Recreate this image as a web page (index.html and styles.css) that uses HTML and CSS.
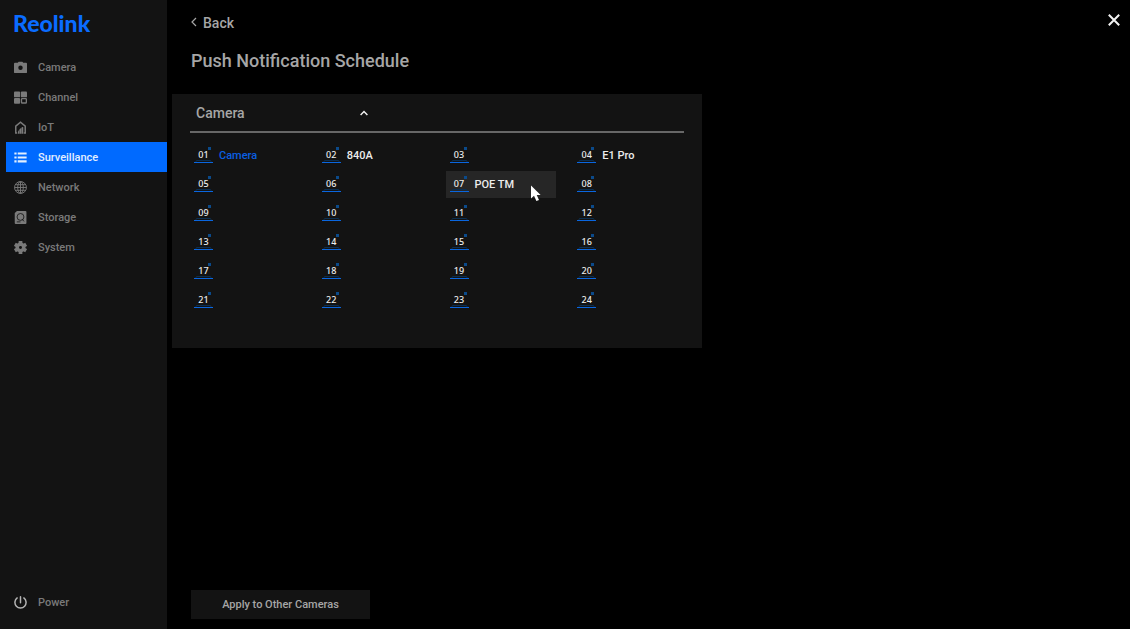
FILE: index.html
```html
<!DOCTYPE html>
<html lang="en">
<head>
<meta charset="utf-8">
<meta name="viewport" content="width=device-width, initial-scale=1">
<title>Push Notification Schedule</title>
<link rel="stylesheet" href="styles.css">
</head>
<body>
<div class="app">
  <aside class="sidebar">
    <div class="logo">Reolink</div>
    <nav class="nav">
      <a class="nav-item" href="#camera">
        <svg class="icon" viewBox="0 0 14 14"><path fill="currentColor" fill-rule="evenodd" d="M1 2h3l1-1.3h4L10 2h3q1 0 1 1v9q0 1-1 1H1q-1 0-1-1V3q0-1 1-1zM7 4.9a2.4 2.4 0 1 0 0 4.8 2.4 2.4 0 0 0 0-4.8z"/></svg>
        <span>Camera</span>
      </a>
      <a class="nav-item" href="#channel">
        <svg class="icon" viewBox="0 0 14 14"><g fill="currentColor"><rect x="0" y="0.6" width="6.6" height="6.2" rx="1"/><rect x="7.4" y="0.6" width="6.6" height="6.2" rx="1"/><rect x="0" y="7.6" width="6.6" height="6" rx="1"/></g><rect x="8.1" y="8.3" width="5.2" height="4.6" rx="0.6" fill="none" stroke="currentColor" stroke-width="1.4"/></svg>
        <span>Channel</span>
      </a>
      <a class="nav-item" href="#iot">
        <svg class="icon" viewBox="0 0 14 14"><path fill="none" stroke="currentColor" stroke-width="1.6" d="M3.4 13H1.9V5.6L7 1.2l5.1 4.4V13h-1.6"/><path fill="currentColor" d="M4.1 13.6q0-3.2 1.5-4.2v4.2zM5.9 13.6V8.8q.8-1 2-1.3v6.1zM8.2 13.6V6.8q1-.6 1.8 0v6.8z"/></svg>
        <span>IoT</span>
      </a>
      <a class="nav-item active" href="#surveillance" aria-current="page">
        <svg class="icon" viewBox="0 0 14 14"><path fill="currentColor" d="M.4 1.6h2.4v2.3H.4zM4 1.6h9.6v2.3H4zM.4 5.8h2.4v2.3H.4zM4 5.8h9.6v2.3H4zM.4 10h2.4v2.3H.4zM4 10h9.6v2.3H4z"/></svg>
        <span>Surveillance</span>
      </a>
      <a class="nav-item" href="#network">
        <svg class="icon" viewBox="0 0 14 14"><g fill="none" stroke="currentColor"><circle cx="7" cy="7" r="6.4"/><ellipse cx="7" cy="7" rx="3" ry="6.4"/><path d="M7 .6v12.8M.6 7h12.8M1.6 4h10.8M1.6 10h10.8"/></g></svg>
        <span>Network</span>
      </a>
      <a class="nav-item" href="#storage">
        <svg class="icon" viewBox="0 0 14 14"><path fill="currentColor" d="M3.2 0H12.4q1 0 1 1v12q0 1-1 1H1.8q-1 0-1-1V2.2z"/><circle cx="7" cy="6.4" r="3.7" fill="none" stroke="#131313" stroke-width="0.9"/><path d="M8.8 8.8l2 2.4M3 11.7h4" stroke="#131313" stroke-width="0.9"/></svg>
        <span>Storage</span>
      </a>
      <a class="nav-item" href="#system">
        <svg class="icon" viewBox="0 0 14 14"><circle cx="7" cy="7" r="3.5" fill="none" stroke="currentColor" stroke-width="3.8"/><g stroke="currentColor" stroke-width="4"><path d="M7 0v2.4M7 11.6V14M.9 3.5l2.1 1.2M11 9.3l2.1 1.2M.9 10.5L3 9.3M11 4.7l2.1-1.2"/></g></svg>
        <span>System</span>
      </a>
    </nav>
    <button class="nav-item power" type="button">
      <svg class="icon" viewBox="0 0 14 14"><path fill="none" stroke="currentColor" stroke-width="1.6" stroke-linecap="round" d="M7 .8v6.4M3.4 2.1a6 6 0 1 0 7.2 0"/></svg>
      <span>Power</span>
    </button>
  </aside>

  <main class="main">
    <header class="header">
      <button class="back" type="button">
        <svg class="back-icon" viewBox="0 0 6 10"><path fill="none" stroke="currentColor" stroke-width="1.2" d="M5 1L1 5l4 4"/></svg>
        <span>Back</span>
      </button>
      <button class="close" type="button" aria-label="Close">
        <svg class="close-icon" viewBox="0 0 12 12"><path stroke="currentColor" stroke-width="2" d="M.8.8l10.4 10.4M11.2.8L.8 11.2"/></svg>
      </button>
    </header>
    <h1 class="title">Push Notification Schedule</h1>

    <section class="panel">
      <button class="picker" type="button" aria-expanded="true" aria-controls="cameras">
        <span class="picker-value">Camera</span>
        <svg class="caret" viewBox="0 0 8 6"><path fill="none" stroke="currentColor" stroke-width="1.4" d="M.6 5L4 1.4 7.4 5"/></svg>
      </button>
      <div class="cameras" id="cameras"></div>
    </section>

    <button class="apply" type="button">Apply to Other Cameras</button>
  </main>
</div>
<script src="cameras.js"></script>
</body>
</html>
```
FILE: styles.css
```css
* { box-sizing: border-box; }

body {
  margin: 0;
  background: #000;
  color: #a6a6a6;
  font: 500 11px/16px Roboto, "Liberation Sans", sans-serif;
}

button {
  margin: 0;
  padding: 0;
  border: 0;
  background: none;
  color: inherit;
  font: inherit;
  text-align: left;
  cursor: pointer;
}

svg { display: block; flex: none; }

.app { display: flex; min-height: 100vh; }

.sidebar {
  display: flex;
  flex-direction: column;
  flex: none;
  width: 167px;
  padding: 10px 0 12px 6px;
  background: #131313;
}

.logo {
  height: 42px;
  padding-left: 7px;
  color: #0a6cff;
  font: 900 23px/27px Lato, sans-serif;
}

.nav-item {
  display: flex;
  align-items: center;
  gap: 11px;
  height: 30px;
  padding-left: 8px;
  color: #7a7a7a;
  line-height: 18px;
  text-decoration: none;
}

.nav-item span { padding-top: 1px; }

.nav-item.active { background: #006aff; color: #e2efff; }

.icon { width: 13px; height: 13px; }

.power { margin-top: auto; }
.power .icon { color: #b4b4b4; }

.main {
  display: flex;
  flex-direction: column;
  flex: 1;
  min-width: 0;
  padding: 10px 10px 10px 5px;
}

.header {
  display: flex;
  justify-content: space-between;
  height: 24px;
  padding-left: 19px;
}

.back {
  display: flex;
  align-items: center;
  gap: 6px;
  font-size: 14px;
}

.back-icon { width: 6px; height: 10px; }

.close { align-self: flex-start; padding: 4px 0; color: #f2f2f2; }
.close-icon { width: 12px; height: 12px; }

.title {
  margin: 14px 0 21px 19px;
  font-size: 18px;
  font-weight: 500;
  line-height: 25px;
}

.panel {
  width: 100%;
  max-width: 530px;
  padding: 0 18px 34px;
  background: #131313;
}

.picker {
  display: flex;
  align-items: center;
  width: 100%;
  height: 39px;
  padding-left: 6px;
  border-bottom: 2px solid #676767;
  font-size: 14px;
}

.back span,
.picker-value { line-height: 18px; padding-top: 1px; }

.picker-value { width: 164px; }
.caret { width: 8px; height: 6px; color: #f2f2f2; }

.cameras {
  display: grid;
  grid-template-columns: repeat(4, 1fr);
  gap: 2px 17px;
  padding-top: 9px;
}

.camera {
  position: relative;
  display: flex;
  align-items: center;
  gap: 6px;
  height: 27px;
  padding-left: 4px;
  color: #ededed;
  white-space: nowrap;
}

.camera.selected .camera-name { color: #0a5fe0; }
.camera.hovered { background: #262626; }

.badge {
  position: relative;
  width: 19px;
  height: 17px;
  font: 500 9px/15px "Noto Sans", sans-serif;
  text-align: center;
}

.badge-frame {
  position: absolute;
  inset: 0;
  width: 19px;
  height: 17px;
}

.pointer {
  position: absolute;
  top: 14px;
  right: 15px;
  width: 11px;
  height: 17px;
}

.apply {
  width: 179px;
  height: 29px;
  margin: auto 0 0 19px;
  background: #131313;
  text-align: center;
}
```
FILE: cameras.js
```js
const names = { 1: "Camera", 2: "840A", 4: "E1 Pro", 7: "POE TM" };
const selected = 1;
const hovered = 7;

const frame = `<svg class="badge-frame" viewBox="0 0 19 17">
  <rect x="14" y="0" width="3" height="3" fill="#0b4a8a"/>
  <path d="M1.5 15.5l1-2h14l1 2" fill="none" stroke="#0b2e50"/>
  <rect y="15" width="19" height="1" fill="#0a66df"/>
</svg>`;

const pointer = `<svg class="pointer" viewBox="0 0 11 17">
  <path fill="#fff" d="M1 .5v13l3-2.7 2.4 5.3 2.6-1.2-2.3-5H10.6z"/>
</svg>`;

const list = document.getElementById("cameras");
for (let i = 1; i <= 24; i++) {
  const item = document.createElement("button");
  item.type = "button";
  item.className = "camera";
  if (i === selected) item.classList.add("selected");
  if (i === hovered) item.classList.add("hovered");
  const number = String(i).padStart(2, "0");
  item.innerHTML =
    `<span class="badge">${frame}${number}</span>` +
    (names[i] ? `<span class="camera-name">${names[i]}</span>` : "") +
    (i === hovered ? pointer : "");
  list.append(item);
}
```
